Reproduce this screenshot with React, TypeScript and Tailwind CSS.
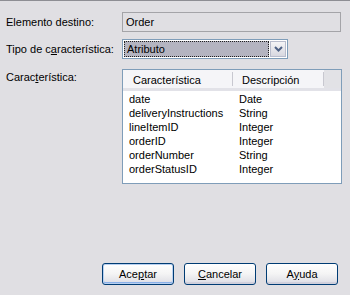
import React from 'react';

const rows = [
  ['date', 'Date'],
  ['deliveryInstructions', 'String'],
  ['lineItemID', 'Integer'],
  ['orderID', 'Integer'],
  ['orderNumber', 'String'],
  ['orderStatusID', 'Integer'],
];

function XpButton({ children, isDefault }: { children: React.ReactNode; isDefault?: boolean }) {
  return (
    <button
      className={`w-[72px] h-[22px] rounded-[3px] border border-[#003c74] text-[11px] text-black bg-gradient-to-b from-[#ffffff] via-[#f4f4f4] to-[#dcdce4] flex items-center justify-center ${isDefault ? 'shadow-[inset_0_0_0_1px_#b8d0f0,inset_0_-1px_0_1px_#8ab0e8]' : 'shadow-[inset_0_-2px_0_#d0d0dc]'}`}
    >
      {children}
    </button>
  );
}

export default function App() {
  return (
    <div className="w-[350px] h-[295px] bg-[#e0dfe3] border-t border-[#8e8e94] relative text-[11px] text-black font-['Liberation_Sans',Tahoma,sans-serif] leading-none">
      {/* Elemento destino */}
      <div className="flex items-center mt-[11px] h-[20px]">
        <span className="w-[122px] pl-[6px]">Elemento destino:</span>
        <div className="w-[219px] h-[20px] border border-[#a4a4a8] flex items-center pl-[3px] bg-[#e0dfe3]">Order</div>
      </div>

      {/* Tipo de caracteristica */}
      <div className="flex items-center mt-[7px] h-[20px]">
        <span className="w-[122px] pl-[6px]">
          Tipo de c<span className="underline">a</span>racterística:
        </span>
        <div className="w-[166px] h-[20px] border border-[#7f9db9] bg-white flex p-[1px]">
          <div className="flex-1 bg-[#b4b4c0] border border-dotted border-[#202020] flex items-center pl-[2px]">Atributo</div>
          <div className="w-[16px] ml-[1px] border border-[#b8bccc] bg-gradient-to-b from-[#f4f4f6] to-[#d8d8e0] flex items-center justify-center">
            <svg width="9" height="6" viewBox="0 0 9 6">
              <path d="M1 1 L4.5 4.5 L8 1" stroke="#4d6185" strokeWidth="2" fill="none" />
            </svg>
          </div>
        </div>
      </div>

      {/* Caracteristica list */}
      <div className="flex mt-[10px]">
        <span className="w-[122px] pl-[6px] pt-[3px]">
          Carac<span className="underline">t</span>erística:
        </span>
        <div className="w-[220px] h-[115px] border border-[#7f9db9] bg-white">
          <div className="flex h-[21px] bg-[#f5f5f8] border-b-[3px] border-[#e2e2e8] items-center">
            <div className="w-[109px] pl-[10px] h-full flex items-center pt-[2px]">Característica</div>
            <div className="w-px h-[14px] bg-[#c8c8d0]" />
            <div className="w-[90px] pl-[9px] h-full flex items-center pt-[2px]">Descripción</div>
            <div className="w-px h-[14px] bg-[#c8c8d0]" />
            <div className="flex-1 h-full bg-[#e2e2e6]" />
          </div>
          <div className="pt-[1px]">
            {rows.map(([name, type]) => (
              <div key={name} className="flex h-[14px] items-center">
                <span className="w-[110px] pl-[6px]">{name}</span>
                <span className="pl-[6px]">{type}</span>
              </div>
            ))}
          </div>
        </div>
      </div>

      {/* Buttons */}
      <div className="absolute left-[102px] top-[262px] flex gap-[10px]">
        <XpButton isDefault>
          <span>Ace<span className="underline">p</span>tar</span>
        </XpButton>
        <XpButton>
          <span><span className="underline">C</span>ancelar</span>
        </XpButton>
        <XpButton>
          <span>A<span className="underline">y</span>uda</span>
        </XpButton>
      </div>
    </div>
  );
}
